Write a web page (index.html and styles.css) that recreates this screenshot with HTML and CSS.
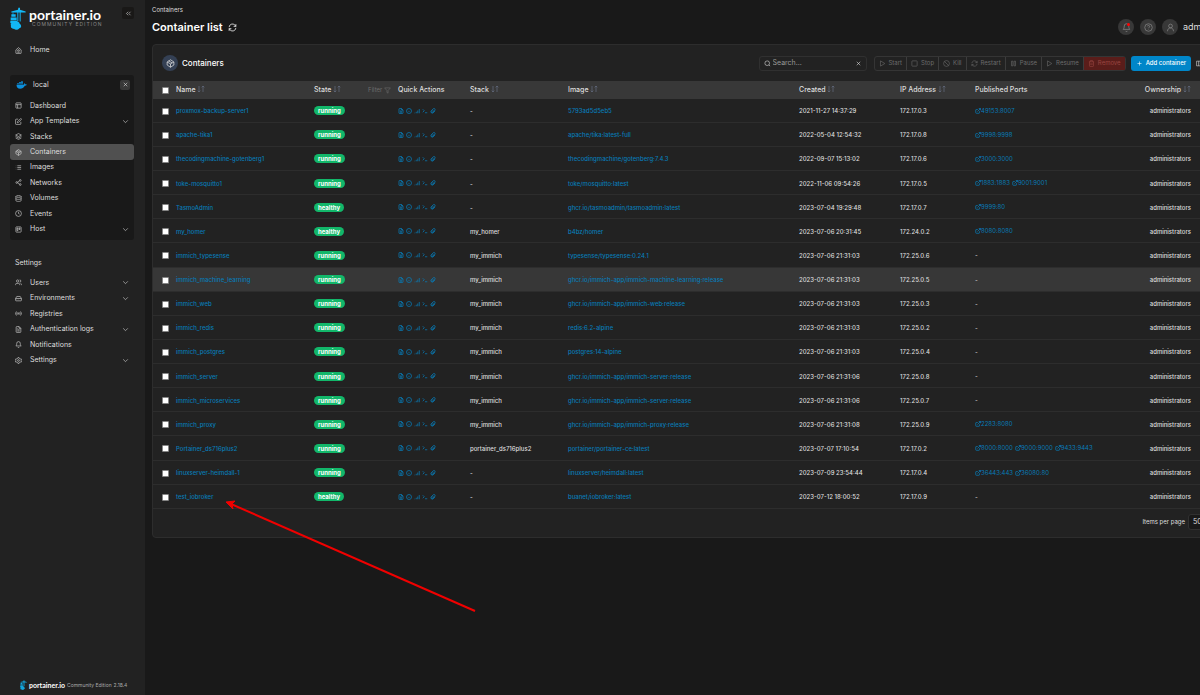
FILE: index.html
```html
<!DOCTYPE html>
<html lang="en">
<head>
  <meta charset="UTF-8">
  <meta name="viewport" content="width=device-width, initial-scale=1.0">
  <title>Portainer | Container list</title>
  <link rel="stylesheet" href="styles.css">
</head>
<body>
  <!-- icon sprite -->
  <svg class="sprite" aria-hidden="true">
    <symbol id="logo" viewBox="0 0 48 68">
      <path d="M25 2h5v6l17 5v3H32v27h-3V16h-4v27h-3V16H4v-3l20-5z"/>
      <path d="M8 16h2v5H8zM4 21h13v8H4zM2 31h18v8H2zM1 41h21v7H1z"/>
      <path d="M6 47c3-5 9-5 12-2 5-3 11 0 11 5 6 3 6 12-1 13-4 6-13 6-16 2-6 1-11-4-9-9-2-4 0-8 3-9z"/>
    </symbol>
    <symbol id="docker" viewBox="0 0 32 24">
      <path d="M1 11h20c3 0 4-2 3-5 2 1 3 2 3 4 2 0 4 0 5 1-1 2-3 3-6 3-3 6-8 9-14 9-7 0-11-4-11-12zM3 7h5v3H3zM9 7h5v3H9zM15 7h5v3h-5zM9 3h5v3H9zM15 3h5v3h-5zM15 0h5v2h-5z"/>
    </symbol>
    <symbol id="home" viewBox="0 0 24 24"><path d="M3 10l9-8 9 8v11a1 1 0 0 1-1 1H4a1 1 0 0 1-1-1zM8 18h8M9 12a3 3 0 0 1 6 0v2H9z"/></symbol>
    <symbol id="layout" viewBox="0 0 24 24"><rect x="3" y="3" width="18" height="18" rx="2"/><path d="M3 9h18M9 21V9"/></symbol>
    <symbol id="edit" viewBox="0 0 24 24"><path d="M11 4H4a2 2 0 0 0-2 2v14a2 2 0 0 0 2 2h14a2 2 0 0 0 2-2v-7"/><path d="M18.500 2.500a2.120 2.120 0 0 1 3 3L12 15l-4 1 1-4z"/></symbol>
    <symbol id="layers" viewBox="0 0 24 24"><path d="M12 2L2 7l10 5 10-5zM2 12l10 5 10-5M2 17l10 5 10-5"/></symbol>
    <symbol id="box" viewBox="0 0 24 24"><path d="M21 16V8l-9-6-9 6v8l9 6zM3 8l9 5 9-5M12 22v-9M7 5l9 5"/></symbol>
    <symbol id="list" viewBox="0 0 24 24"><path d="M8 6h13M8 12h13M8 18h13M3 6h1M3 12h1M3 18h1"/></symbol>
    <symbol id="share" viewBox="0 0 24 24"><circle cx="18" cy="5" r="3"/><circle cx="6" cy="12" r="3"/><circle cx="18" cy="19" r="3"/><path d="M9 13l6 4M15 7l-6 4"/></symbol>
    <symbol id="database" viewBox="0 0 24 24"><ellipse cx="12" cy="5" rx="9" ry="3"/><path d="M21 12c0 2-4 3-9 3s-9-1-9-3M3 5v14c0 2 4 3 9 3s9-1 9-3V5"/></symbol>
    <symbol id="clock" viewBox="0 0 24 24"><circle cx="12" cy="12" r="10"/><path d="M12 6v6l4 2"/></symbol>
    <symbol id="trello" viewBox="0 0 24 24"><rect x="3" y="3" width="18" height="18" rx="2"/><path d="M7 7h3v9H7zM14 7h3v5h-3z"/></symbol>
    <symbol id="users" viewBox="0 0 24 24"><circle cx="9" cy="7" r="4"/><path d="M2 21v-2a4 4 0 0 1 4-4h6a4 4 0 0 1 4 4v2M16 3a4 4 0 0 1 0 8M22 21v-2a4 4 0 0 0-3-4"/></symbol>
    <symbol id="drive" viewBox="0 0 24 24"><path d="M22 12H2M6 5L2 12v6a2 2 0 0 0 2 2h16a2 2 0 0 0 2-2v-6l-4-7zM6 16h1M10 16h1"/></symbol>
    <symbol id="radio" viewBox="0 0 24 24"><circle cx="12" cy="12" r="2"/><path d="M5 19a10 10 0 0 1 0-14M8 16a6 6 0 0 1 0-8M16 8a6 6 0 0 1 0 8M19 5a10 10 0 0 1 0 14"/></symbol>
    <symbol id="file" viewBox="0 0 24 24"><path d="M14 2H6a2 2 0 0 0-2 2v16a2 2 0 0 0 2 2h12a2 2 0 0 0 2-2V8zM14 2v6h6M8 13h8M8 17h8M8 9h2"/></symbol>
    <symbol id="bell" viewBox="0 0 24 24"><path d="M6 8a6 6 0 0 1 12 0c0 7 3 9 3 9H3s3-2 3-9M10 21a2 2 0 0 0 4 0"/></symbol>
    <symbol id="gear" viewBox="0 0 24 24"><circle cx="12" cy="12" r="3"/><path d="M10 2h4l1 3 3 2 3-1 2 4-2 2 2 2-2 4-3-1-3 2-1 3h-4l-1-3-3-2-3 1-2-4 2-2-2-2 2-4 3 1 3-2z"/></symbol>
    <symbol id="chevron" viewBox="0 0 24 24"><path d="M4 8l8 8 8-8"/></symbol>
    <symbol id="chevrons" viewBox="0 0 24 24"><path d="M11 18l-6-6 6-6M19 18l-6-6 6-6"/></symbol>
    <symbol id="x" viewBox="0 0 24 24"><path d="M18 6L6 18M6 6l12 12"/></symbol>
    <symbol id="refresh" viewBox="0 0 24 24"><path d="M21 3v6h-6M3 21v-6h6M3 11a9 9 0 0 1 15-6l3 4M21 13a9 9 0 0 1-15 6l-3-4"/></symbol>
    <symbol id="help" viewBox="0 0 24 24"><circle cx="12" cy="12" r="10"/><path d="M9 9a3 3 0 0 1 6 1c0 2-3 2-3 4M12 17v1"/></symbol>
    <symbol id="user" viewBox="0 0 24 24"><circle cx="12" cy="8" r="5"/><path d="M4 22c0-5 3-9 8-9s8 4 8 9"/></symbol>
    <symbol id="search" viewBox="0 0 24 24"><circle cx="11" cy="11" r="8"/><path d="M21 21l-4-4"/></symbol>
    <symbol id="play" viewBox="0 0 24 24"><path d="M5 3l15 9-15 9z"/></symbol>
    <symbol id="square" viewBox="0 0 24 24"><rect x="3" y="3" width="18" height="18" rx="2"/></symbol>
    <symbol id="slash" viewBox="0 0 24 24"><circle cx="12" cy="12" r="10"/><path d="M5 5l14 14"/></symbol>
    <symbol id="pause" viewBox="0 0 24 24"><path d="M5 4h5v16H5zM14 4h5v16h-5z"/></symbol>
    <symbol id="trash" viewBox="0 0 24 24"><path d="M3 6h18M19 6v14a2 2 0 0 1-2 2H7a2 2 0 0 1-2-2V6M8 6V2h8v4M10 11v6M14 11v6"/></symbol>
    <symbol id="plus" viewBox="0 0 24 24"><path d="M12 5v14M5 12h14"/></symbol>
    <symbol id="columns" viewBox="0 0 24 24"><path d="M2 4h20v16H2zM9 4v16M15 4v16"/></symbol>
    <symbol id="sort" viewBox="0 0 24 24"><path d="M6 3v18M2 17l4 4 4-4M18 21V3M14 7l4-4 4 4"/></symbol>
    <symbol id="filter" viewBox="0 0 24 24"><path d="M22 3H2l8 9v7l4 2v-9z"/></symbol>
    <symbol id="info" viewBox="0 0 24 24"><circle cx="12" cy="12" r="10"/><path d="M12 16v-4M12 8v1"/></symbol>
    <symbol id="stats" viewBox="0 0 24 24"><path d="M3 21v-2M9 21v-6M15 21V10M21 21V4"/></symbol>
    <symbol id="console" viewBox="0 0 24 24"><path d="M3 17l6-6-6-6M12 19h9"/></symbol>
    <symbol id="clip" viewBox="0 0 24 24"><path d="M21 11l-9 9a6 6 0 0 1-8-8l9-9a4 4 0 0 1 6 6l-9 9a2 2 0 0 1-3-3l8-8"/></symbol>
    <symbol id="external" viewBox="0 0 24 24"><path d="M18 13v6a2 2 0 0 1-2 2H5a2 2 0 0 1-2-2V8a2 2 0 0 1 2-2h6M15 2h7v7M10 14L22 2"/></symbol>
  </svg>

  <div class="page">
    <aside class="sidebar">
      <div class="brand">
        <svg class="brand-logo"><use href="#logo"/></svg>
        <div class="brand-text">
          <span class="brand-name">portainer.io</span>
          <span class="brand-edition">COMMUNITY EDITION</span>
        </div>
        <button class="collapse" type="button" aria-label="Collapse sidebar"><svg class="icon"><use href="#chevrons"/></svg></button>
      </div>

      <nav class="menu">
        <a class="item home" href="#"><svg class="icon"><use href="#home"/></svg>Home</a>

        <div class="environment">
          <div class="environment-head">
            <svg class="docker"><use href="#docker"/></svg>
            <span>local</span>
            <button type="button" aria-label="Close environment"><svg class="icon"><use href="#x"/></svg></button>
          </div>
          <div class="items docker-items">
            <a class="item" href="#"><svg class="icon"><use href="#layout"/></svg>Dashboard</a>
            <a class="item" href="#"><svg class="icon"><use href="#edit"/></svg>App Templates<svg class="icon arrow"><use href="#chevron"/></svg></a>
            <a class="item" href="#"><svg class="icon"><use href="#layers"/></svg>Stacks</a>
            <a class="item active" href="#"><svg class="icon"><use href="#box"/></svg>Containers</a>
            <a class="item" href="#"><svg class="icon"><use href="#list"/></svg>Images</a>
            <a class="item" href="#"><svg class="icon"><use href="#share"/></svg>Networks</a>
            <a class="item" href="#"><svg class="icon"><use href="#database"/></svg>Volumes</a>
            <a class="item" href="#"><svg class="icon"><use href="#clock"/></svg>Events</a>
            <a class="item" href="#"><svg class="icon"><use href="#trello"/></svg>Host<svg class="icon arrow"><use href="#chevron"/></svg></a>
          </div>
        </div>

        <h2>Settings</h2>
        <div class="items settings-items">
          <a class="item" href="#"><svg class="icon"><use href="#users"/></svg>Users<svg class="icon arrow"><use href="#chevron"/></svg></a>
          <a class="item" href="#"><svg class="icon"><use href="#drive"/></svg>Environments<svg class="icon arrow"><use href="#chevron"/></svg></a>
          <a class="item" href="#"><svg class="icon"><use href="#radio"/></svg>Registries</a>
          <a class="item" href="#"><svg class="icon"><use href="#file"/></svg>Authentication logs<svg class="icon arrow"><use href="#chevron"/></svg></a>
          <a class="item" href="#"><svg class="icon"><use href="#bell"/></svg>Notifications</a>
          <a class="item" href="#"><svg class="icon"><use href="#gear"/></svg>Settings<svg class="icon arrow"><use href="#chevron"/></svg></a>
        </div>
      </nav>

      <footer class="version">
        <svg class="version-logo"><use href="#logo"/></svg>
        <span class="version-name">portainer.io</span>
        <span>Community Edition</span>
        <span>2.18.4</span>
      </footer>
    </aside>

    <main class="main">
      <header class="header">
        <div>
          <div class="breadcrumb">Containers</div>
          <h1>Container list <button type="button" aria-label="Refresh"><svg class="icon"><use href="#refresh"/></svg></button></h1>
        </div>
        <div class="user-menu">
          <button class="round" type="button" aria-label="Notifications"><svg class="icon"><use href="#bell"/></svg><span class="dot"></span></button>
          <button class="round" type="button" aria-label="Help"><svg class="icon"><use href="#help"/></svg></button>
          <button class="user" type="button"><span class="round"><svg class="icon"><use href="#user"/></svg></span>admin</button>
        </div>
      </header>

      <section class="card">
        <div class="toolbar">
          <span class="card-icon"><svg class="icon"><use href="#box"/></svg></span>
          <h2>Containers</h2>
          <div class="search">
            <svg class="icon"><use href="#search"/></svg>
            <input type="text" placeholder="Search..." aria-label="Search">
            <button type="button" aria-label="Clear search"><svg class="icon"><use href="#x"/></svg></button>
          </div>
          <div class="actions">
            <button type="button" disabled><svg class="icon"><use href="#play"/></svg>Start</button>
            <button type="button" disabled><svg class="icon"><use href="#square"/></svg>Stop</button>
            <button type="button" disabled><svg class="icon"><use href="#slash"/></svg>Kill</button>
            <button type="button" disabled><svg class="icon"><use href="#refresh"/></svg>Restart</button>
            <button type="button" disabled><svg class="icon"><use href="#pause"/></svg>Pause</button>
            <button type="button" disabled><svg class="icon"><use href="#play"/></svg>Resume</button>
            <button class="remove" type="button" disabled><svg class="icon"><use href="#trash"/></svg>Remove</button>
          </div>
          <button class="add" type="button"><svg class="icon"><use href="#plus"/></svg>Add container</button>
          <button class="columns" type="button" aria-label="Columns"><svg class="icon"><use href="#columns"/></svg></button>
        </div>

        <table>
          <colgroup>
            <col class="col-check"><col class="col-name"><col class="col-state"><col class="col-quick"><col class="col-stack">
            <col class="col-image"><col class="col-created"><col class="col-ip"><col><col class="col-owner">
          </colgroup>
          <thead>
            <tr>
              <th class="check"><input type="checkbox" aria-label="Select all"></th>
              <th>Name <svg class="icon sort"><use href="#sort"/></svg></th>
              <th><div class="state-head"><span>State <svg class="icon sort"><use href="#sort"/></svg></span><button type="button">Filter <svg class="icon"><use href="#filter"/></svg></button></div></th>
              <th>Quick Actions</th>
              <th>Stack <svg class="icon sort"><use href="#sort"/></svg></th>
              <th>Image <svg class="icon sort"><use href="#sort"/></svg></th>
              <th>Created <svg class="icon sort"><use href="#sort"/></svg></th>
              <th>IP Address <svg class="icon sort"><use href="#sort"/></svg></th>
              <th>Published Ports</th>
              <th class="owner">Ownership <svg class="icon sort"><use href="#sort"/></svg></th>
            </tr>
          </thead>
          <tbody id="containers"></tbody>
        </table>

        <div class="pager">
          <label for="page-size">Items per page</label>
          <select id="page-size"><option>50</option></select>
        </div>
      </section>
    </main>

    <!-- pointer to the new container -->
    <svg class="pointer" viewBox="0 0 252 114" aria-hidden="true">
      <path class="pointer-line" d="M250 111L6 4"/>
      <path class="pointer-head" d="M1 2l9-1-3 3 1 5z"/>
    </svg>
  </div>

  <script src="app.js"></script>
</body>
</html>
```
FILE: styles.css
```css
* {
  box-sizing: border-box;
}

body {
  margin: 0;
  background: #191919;
  color: #dedede;
  font-family: Inter, "Liberation Sans", sans-serif;
  font-size: 7px;
  line-height: 10px;
}

a {
  color: #087bb6;
  text-decoration: none;
}

button,
input,
select {
  margin: 0;
  padding: 0;
  border: 0;
  background: none;
  color: inherit;
  font: inherit;
}

h1,
h2 {
  margin: 0;
  font-size: 7px;
  font-weight: 400;
}

.sprite {
  position: absolute;
  width: 0;
  height: 0;
}

.icon {
  flex: none;
  width: 7px;
  height: 7px;
  fill: none;
  stroke: currentColor;
  stroke-width: 2;
  vertical-align: middle;
}

.page {
  position: relative;
  display: flex;
  min-height: 100vh;
  overflow: hidden;
}

/* Sidebar */
.sidebar {
  display: flex;
  flex: none;
  flex-direction: column;
  width: 145px;
  padding: 7px 11px 5px 10px;
  background: #222;
}

.brand {
  display: flex;
  align-items: flex-start;
  height: 24px;
}

.brand-logo {
  width: 16px;
  height: 23px;
  fill: #12b7f5;
}

.brand-text {
  display: flex;
  flex-direction: column;
  margin-left: 3px;
}

.brand-name {
  color: #fff;
  font-family: Lato, sans-serif;
  font-size: 14px;
  font-weight: 700;
  line-height: 15px;
}

.brand-edition {
  margin-left: 3px;
  color: #888;
  font-size: 5px;
  line-height: 5px;
  letter-spacing: 1px;
}

.collapse {
  display: grid;
  place-items: center;
  width: 12px;
  height: 12px;
  margin-left: auto;
  border-radius: 2px;
  background: #191817;
}

.menu {
  display: flex;
  flex-direction: column;
}

.item {
  display: flex;
  align-items: center;
  gap: 8px;
  padding: 0 5px;
  border-radius: 3px;
  color: #dedede;
}

.home {
  height: 16px;
  margin: 11px 0 17px;
}

.environment {
  padding: 0 0 3px;
  border-radius: 3px;
  background: #191919;
}

.environment-head {
  display: flex;
  align-items: center;
  gap: 6px;
  height: 19px;
  margin-bottom: 4px;
  padding: 0 4px 0 6px;
}

.environment-head button {
  display: grid;
  place-items: center;
  width: 10px;
  height: 10px;
  margin-left: auto;
  border-radius: 2px;
  background: #383838;
}

.docker {
  width: 11px;
  height: 8px;
  fill: #0b8fdc;
}

.items {
  display: grid;
  grid-auto-rows: 1fr;
}

.docker-items {
  height: 139px;
}

.settings-items {
  height: 93px;
}

.item.active {
  background: #505050;
}

.arrow {
  margin-left: auto;
}

.sidebar h2 {
  margin: 18px 0 7px;
  padding-left: 5px;
}

.version {
  display: flex;
  align-items: center;
  gap: 2px;
  margin-top: auto;
  padding-left: 10px;
  color: #aaa;
  font-size: 5px;
}

.version-logo {
  width: 7px;
  height: 10px;
  fill: #12a4dc;
}

.version-name {
  color: #fff;
  font-family: Lato, sans-serif;
  font-size: 7px;
  font-weight: 700;
}

/* Page header */
.main {
  flex: 1;
  min-width: 0;
  margin-right: -24px;
  padding: 4px 7px 0;
}

.header {
  display: flex;
  justify-content: space-between;
  height: 40px;
}

.breadcrumb {
  font-size: 6px;
  line-height: 12px;
}

h1 {
  display: flex;
  align-items: center;
  gap: 5px;
  margin-top: 3px;
  color: #fff;
  font-size: 11px;
  font-weight: 600;
  line-height: 16px;
}

h1 button {
  display: grid;
  place-items: center;
}

h1 .icon {
  width: 9px;
  height: 9px;
}

.user-menu {
  display: flex;
  align-items: center;
  gap: 6px;
  height: 46px;
}

.round {
  position: relative;
  display: grid;
  place-items: center;
  width: 16px;
  height: 16px;
  border-radius: 50%;
  background: #383838;
  color: #858585;
}

.round .icon {
  width: 9px;
  height: 9px;
}

.dot {
  position: absolute;
  top: 4px;
  right: 4px;
  width: 3px;
  height: 3px;
  border-radius: 50%;
  background: #f00;
}

.user {
  display: flex;
  align-items: center;
  gap: 5px;
  width: 55px;
  font-size: 9px;
}

/* Containers table */
.card {
  border: 1px solid #2d2d2d;
  border-radius: 4px;
  background: #222;
}

.toolbar {
  display: flex;
  align-items: center;
  height: 36px;
  padding: 0 13px 0 9px;
}

.card-icon {
  display: grid;
  place-items: center;
  width: 16px;
  height: 16px;
  border-radius: 50%;
  background: #344054;
}

.card-icon .icon {
  width: 9px;
  height: 9px;
}

.toolbar h2 {
  margin-left: 4px;
  color: #fff;
  font-size: 8px;
  font-weight: 500;
}

.search {
  display: flex;
  align-items: center;
  gap: 2px;
  width: 108px;
  height: 15px;
  margin: 0 7px 0 auto;
  padding: 0 4px;
  border: 1px solid #303030;
  border-radius: 3px;
}

.search input {
  flex: 1;
  min-width: 0;
  outline: none;
}

.search button {
  display: grid;
}

.search input::placeholder {
  color: #999;
}

.actions {
  display: flex;
  height: 15px;
  border: 1px solid #353535;
  border-radius: 3px;
  color: #6c6c6c;
  font-size: 6px;
}

.actions button,
.add {
  display: flex;
  align-items: center;
  gap: 3px;
  padding: 0 4px;
  white-space: nowrap;
}

.actions button + button {
  border-left: 1px solid #3c3c3c;
}

.actions .remove {
  background: #5a1d1a;
  color: #9a4641;
}

.add {
  height: 15px;
  margin: 0 5px;
  padding: 0 5px;
  border-radius: 3px;
  background: #0086c9;
  color: #fff;
  font-size: 6px;
  font-weight: 500;
}

table {
  width: 100%;
  height: 428px;
  border-collapse: collapse;
  table-layout: fixed;
  white-space: nowrap;
}

.col-check { width: 23px; }
.col-name { width: 138px; }
.col-state { width: 84px; }
.col-quick { width: 72px; }
.col-stack { width: 98px; }
.col-image { width: 231px; }
.col-created { width: 101px; }
.col-ip { width: 75px; }
.col-owner { width: 100px; }

th,
td {
  padding: 0;
  text-align: left;
}

th {
  height: 18px;
  background: #383838;
  font-weight: 500;
}

td {
  padding-top: 2px;
  border-bottom: 1px solid #2d2d2d;
  font-size: 6px;
  font-weight: 500;
}

tr.hovered td {
  background: #373737;
}

.sort {
  width: 8px;
  height: 8px;
  color: #667085;
  vertical-align: -1px;
}

.check {
  padding-left: 9px;
  line-height: 0;
}

.check input {
  display: block;
  width: 7px;
  height: 7px;
  border: 1px solid #858585;
  border-radius: 1px;
  background: #fff;
  appearance: none;
}

.state-head {
  display: flex;
  justify-content: space-between;
  padding-right: 7px;
}

.state-head button {
  color: #6c6c6c;
  font-size: 6px;
  font-weight: 400;
}

.badge {
  display: inline-block;
  height: 9px;
  padding: 0 4px;
  border-radius: 5px;
  background: #12b76a;
  color: #fff;
  font-weight: 700;
  line-height: 9px;
}

.quick,
.ports {
  display: flex;
  align-items: center;
  gap: 2px;
  padding-bottom: 1px;
}

.quick .icon,
.ports .icon {
  width: 6px;
  height: 6px;
  stroke-width: 3;
}

.quick .icon {
  display: block;
}

.ports {
  font-weight: 400;
}

.ports .icon {
  vertical-align: -1px;
}

.owner {
  padding-right: 25px;
  text-align: right;
}

.pager {
  display: flex;
  align-items: center;
  justify-content: flex-end;
  gap: 3px;
  height: 28px;
  padding: 0 8px 2px 0;
  font-size: 6px;
}

.pager select {
  width: 20px;
  height: 16px;
  padding-left: 4px;
  border: 1px solid #303030;
  border-radius: 3px;
  background: #191919;
  font-size: 7px;
  appearance: none;
}

/* Arrow drawn over the page */
.pointer {
  position: absolute;
  top: 500px;
  left: 225px;
  width: 252px;
  height: 114px;
}

.pointer-line {
  stroke: #f00000;
  stroke-width: 2;
}

.pointer-head {
  fill: #f00000;
  stroke: #f00000;
}
```
FILE: app.js
```js
const containers = [
  { name: 'proxmox-backup-server1', state: 'running', stack: '-', image: '5793ad5d5eb5', created: '2021-11-27 14:37:29', ip: '172.17.0.3', ports: ['49153:8007'] },
  { name: 'apache-tika1', state: 'running', stack: '-', image: 'apache/tika:latest-full', created: '2022-05-04 12:54:32', ip: '172.17.0.8', ports: ['9998:9998'] },
  { name: 'thecodingmachine-gotenberg1', state: 'running', stack: '-', image: 'thecodingmachine/gotenberg:7.4.3', created: '2022-09-07 15:13:02', ip: '172.17.0.6', ports: ['3000:3000'] },
  { name: 'toke-mosquitto1', state: 'running', stack: '-', image: 'toke/mosquitto:latest', created: '2022-11-06 09:54:26', ip: '172.17.0.5', ports: ['1883:1883', '9001:9001'] },
  { name: 'TasmoAdmin', state: 'healthy', stack: '-', image: 'ghcr.io/tasmoadmin/tasmoadmin:latest', created: '2023-07-04 19:29:48', ip: '172.17.0.7', ports: ['9999:80'] },
  { name: 'my_homer', state: 'healthy', stack: 'my_homer', image: 'b4bz/homer', created: '2023-07-06 20:31:45', ip: '172.24.0.2', ports: ['8080:8080'] },
  { name: 'immich_typesense', state: 'running', stack: 'my_immich', image: 'typesense/typesense:0.24.1', created: '2023-07-06 21:31:03', ip: '172.25.0.6', ports: [] },
  { name: 'immich_machine_learning', state: 'running', stack: 'my_immich', image: 'ghcr.io/immich-app/immich-machine-learning:release', created: '2023-07-06 21:31:03', ip: '172.25.0.5', ports: [], hovered: true },
  { name: 'immich_web', state: 'running', stack: 'my_immich', image: 'ghcr.io/immich-app/immich-web:release', created: '2023-07-06 21:31:03', ip: '172.25.0.3', ports: [] },
  { name: 'immich_redis', state: 'running', stack: 'my_immich', image: 'redis:6.2-alpine', created: '2023-07-06 21:31:03', ip: '172.25.0.2', ports: [] },
  { name: 'immich_postgres', state: 'running', stack: 'my_immich', image: 'postgres:14-alpine', created: '2023-07-06 21:31:03', ip: '172.25.0.4', ports: [] },
  { name: 'immich_server', state: 'running', stack: 'my_immich', image: 'ghcr.io/immich-app/immich-server:release', created: '2023-07-06 21:31:06', ip: '172.25.0.8', ports: [] },
  { name: 'immich_microservices', state: 'running', stack: 'my_immich', image: 'ghcr.io/immich-app/immich-server:release', created: '2023-07-06 21:31:06', ip: '172.25.0.7', ports: [] },
  { name: 'immich_proxy', state: 'running', stack: 'my_immich', image: 'ghcr.io/immich-app/immich-proxy:release', created: '2023-07-06 21:31:08', ip: '172.25.0.9', ports: ['2283:8080'] },
  { name: 'Portainer_ds716plus2', state: 'running', stack: 'portainer_ds716plus2', image: 'portainer/portainer-ce:latest', created: '2023-07-07 17:10:54', ip: '172.17.0.2', ports: ['8000:8000', '9000:9000', '9433:9443'] },
  { name: 'linuxserver-heimdall-1', state: 'running', stack: '-', image: 'linuxserver/heimdall:latest', created: '2023-07-09 23:54:44', ip: '172.17.0.4', ports: ['36443:443', '36080:80'] },
  { name: 'test_iobroker', state: 'healthy', stack: '-', image: 'buanet/iobroker:latest', created: '2023-07-12 18:00:52', ip: '172.17.0.9', ports: [] }
];

const icon = (name) => `<svg class="icon"><use href="#${name}"/></svg>`;

const quickActions = [
  ['file', 'Logs'],
  ['info', 'Inspect'],
  ['stats', 'Stats'],
  ['console', 'Console'],
  ['clip', 'Attach']
].map(([name, label]) => `<a href="#" aria-label="${label}">${icon(name)}</a>`).join('');

document.getElementById('containers').innerHTML = containers.map((c) => `
  <tr class="${c.hovered ? 'hovered' : ''}">
    <td class="check"><input type="checkbox" aria-label="Select ${c.name}"></td>
    <td><a href="#">${c.name}</a></td>
    <td><span class="badge">${c.state}</span></td>
    <td><div class="quick">${quickActions}</div></td>
    <td>${c.stack}</td>
    <td><a href="#">${c.image}</a></td>
    <td>${c.created}</td>
    <td>${c.ip}</td>
    <td><div class="ports">${c.ports.map((p) => `<a href="#">${icon('external')}${p}</a>`).join('') || '-'}</div></td>
    <td class="owner">administrators</td>
  </tr>`).join('');
```
